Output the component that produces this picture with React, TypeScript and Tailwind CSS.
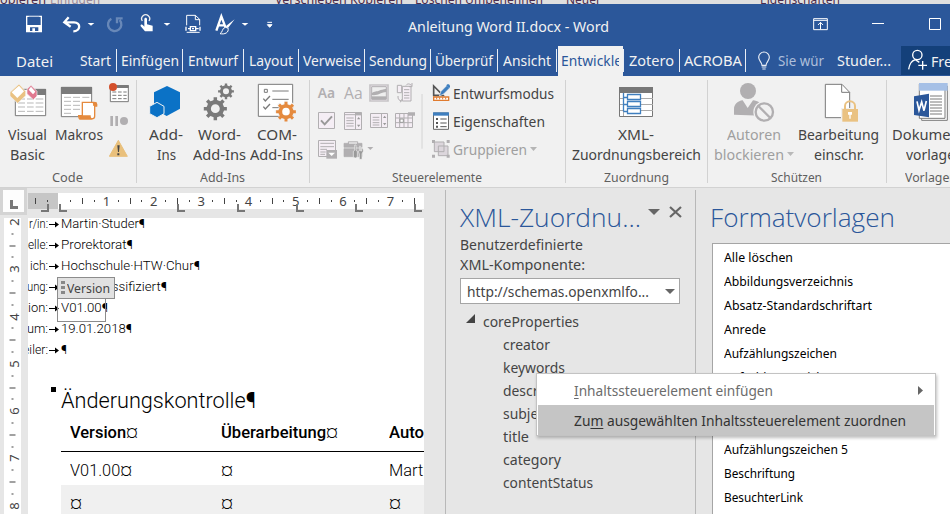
import { useLayoutEffect, useRef, useState, type ReactNode } from "react";

/** A single line of text, condensed or widened to fill the width of its box. */
function Fit({ className = "", children }: { className?: string; children: ReactNode }) {
  const outer = useRef<HTMLSpanElement>(null);
  const inner = useRef<HTMLSpanElement>(null);
  const [k, setK] = useState(1);
  useLayoutEffect(() => {
    if (outer.current && inner.current && inner.current.offsetWidth) {
      setK(outer.current.offsetWidth / inner.current.getBoundingClientRect().width);
    }
  }, []);
  return (
    <span ref={outer} className={"block shrink-0 whitespace-nowrap " + className}>
      <span ref={inner} className="inline-block origin-left whitespace-pre" style={{ transform: `scaleX(${k})` }}>
        {children}
      </span>
    </span>
  );
}

const G = "#7a7a7a";
const L = "#b1afb1";

function Caret({ className = "" }: { className?: string }) {
  return (
    <svg className={className} width="7" height="4" viewBox="0 0 7 4">
      <path d="M0 0h7L3.5 4z" fill="currentColor" />
    </svg>
  );
}

function gearPath(cx: number, cy: number, r: number, teeth = 8) {
  const pts: string[] = [];
  for (let i = 0; i < teeth; i++) {
    const a = (i * 2 * Math.PI) / teeth;
    const s = Math.PI / teeth;
    for (const [da, rr] of [[-s * 0.95, 0.74], [-s * 0.5, 0.76], [-s * 0.38, 1], [s * 0.38, 1], [s * 0.5, 0.76]]) {
      pts.push(`${cx + Math.cos(a + da) * rr * r} ${cy + Math.sin(a + da) * rr * r}`);
    }
  }
  const h = r * 0.38;
  return `M${pts.join("L")}ZM${cx - h} ${cy}a${h} ${h} 0 1 0 ${2 * h} 0a${h} ${h} 0 1 0 ${-2 * h} 0Z`;
}

function BehindStrip() {
  return (
    <div className="flex h-1 overflow-hidden bg-[#dfdfdf] text-[13px] leading-4 text-[#4c2c4c]">
      <div className="-mt-[9px] flex">
        <Fit className="w-[46px]">opieren</Fit>
        <Fit className="ml-1 w-[50px] text-[#9a8a9a]">Einfügen</Fit>
        <Fit className="ml-[175px] w-[128px]">Verschieben Kopieren</Fit>
        <Fit className="ml-3 w-[128px]">Löschen Umbenennen</Fit>
        <Fit className="ml-[23px] w-[35px]">Neuer</Fit>
        <Fit className="ml-[159px] w-[80px]">Eigenschaften</Fit>
      </div>
    </div>
  );
}

function TitleBar() {
  return (
    <div className="flex h-[42px] text-[#f2f2f2]">
      <svg className="shrink-0" width="300" height="42" viewBox="0 12 900 126">
        <path d="M80 49h44v46H80z" fill="none" stroke="#fff" strokeWidth="4" />
        <path d="M86 50h32v23H86z" fill="#2b579a" />
        <path d="M80 75h44v20h-9v-13H90v13H80zM97 85h8v12h-8z" fill="#fff" />
        <path d="M206 52l-13 15 19 13M194 67h28c22 0 20 27-2 27" fill="none" stroke="#fff" strokeWidth="7" />
        <path d="M263 69h20l-10 8zM491 69h20l-10 8zM725 69h20l-10 8z" fill="#fff" />
        <path d="M334 56a20 20 0 1 0 25 4M351 70V55h17" fill="none" stroke="#6888b8" strokeWidth="7" />
        <path d="M427 63a12 12 0 1 1 20 0" fill="none" stroke="#eee" strokeWidth="4" />
        <path d="M433 58c0-6 8-6 8 0v15l17 4v17H435l-13-15c-2-5 4-7 7-3l4 4z" fill="#fff" />
        <path d="M560 76V46h26l13 12v18M586 46v13h13M560 97h39" fill="none" stroke="#fff" strokeWidth="3" />
        <path d="M571 80h16v12h-16zM558 80v12M600 80v12M564 86h6M588 86h8" fill="none" stroke="#fff" strokeWidth="4" />
        <path d="M576 84h6v4h-6z" fill="#fff" />
        <path d="M649 92l15-43 15 40M655 76h20" fill="none" stroke="#fff" strokeWidth="7" />
        <path d="M704 58l-20 26-7-5z" fill="#fff" />
        <path d="M684 84c4 14-10 20-24 17 9-4 5-16 16-19z" fill="#2b579a" stroke="#fff" strokeWidth="3" />
        <path d="M802 67h14M802 74h14l-7 8z" fill="#fff" stroke="#fff" strokeWidth="3" />
      </svg>
      <Fit className="ml-[108px] w-[201px] text-[15px] leading-[44px]">Anleitung Word II.docx - Word</Fit>
      <svg className="ml-[191px] shrink-0" width="150" height="42" viewBox="510 12 450 126">
        <path d="M551 56h41v33h-41zM551 61h41M571.500 88V67M564 75l7.500-8 7.500 8" fill="none" stroke="#fff" strokeWidth="3" />
        <path d="M726 70.500h36" stroke="#fff" strokeWidth="3" />
        <path d="M898.500 55.500h33v33h-33z" fill="none" stroke="#fff" strokeWidth="3" />
      </svg>
    </div>
  );
}

const tabs = [
  { t: "Start", cell: "w-[37px]", w: "w-[31px]" },
  { t: "Einfügen", cell: "w-[66px] pl-1", w: "w-[58px]" },
  { t: "Entwurf", cell: "w-[61px] pl-[5px]", w: "w-[50px]" },
  { t: "Layout", cell: "w-[55px] pl-[5px]", w: "w-[44px]" },
  { t: "Verweise", cell: "w-[66px] pl-1", w: "w-[58px]" },
  { t: "Sendung", cell: "w-[66px] pl-1", w: "w-[58px]" },
  { t: "Überprüf", cell: "w-[67px] pl-1", w: "w-[58px]" },
  { t: "Ansicht", cell: "w-[59px] pl-[5px]", w: "w-[48px]" },
];

function TabRow() {
  const divider = "h-[23px] border-r border-[#e8edf5]";
  return (
    <div className="flex h-[30px] text-[15px] leading-[23px] text-[#f2f2f2]">
      <Fit className="ml-[16px] mt-[4px] w-[37px]">Datei</Fit>
      <div className="ml-[27px] mt-[3px] flex">
        {tabs.map((tab) => (
          <div key={tab.t} className={`${divider} ${tab.cell}`}>
            <Fit className={tab.w}>{tab.t}</Fit>
          </div>
        ))}
      </div>
      <div className="ml-px h-[30px] w-[65px] bg-[#f1f1f1] pl-[3px] pt-[3px] text-[#2b579a]">
        <div className="w-[58px] overflow-hidden">
          <Fit className="w-[61px]">Entwickle</Fit>
        </div>
      </div>
      <div className="mt-[3px] flex">
        <div className="h-[23px] w-px bg-[#e8edf5]" />
        <div className={`${divider} w-[56px] pl-[5px]`}>
          <Fit className="w-[45px]">Zotero</Fit>
        </div>
        <div className={`${divider} w-[66px] pl-1`}>
          <Fit className="w-[58px]">ACROBA</Fit>
        </div>
      </div>
      <svg className="ml-[11px] mt-[4px] shrink-0" width="15" height="22" viewBox="381 150 45 66">
        <path d="M396 196c0-10-10-13-10-24a16 16 0 0 1 32 0c0 11-10 14-10 24zM395 201h14M397 207h10" fill="none" stroke="#e8edf5" strokeWidth="3.500" />
      </svg>
      <Fit className="ml-[6px] mt-[3px] w-[46px] text-[#aebfdb]">Sie wür</Fit>
      <Fit className="ml-[13px] mt-[3px] w-[54px]">Studer...</Fit>
      <div className="ml-[10px] flex h-[29px] w-[49px] overflow-hidden bg-[#14407a]">
        <svg className="ml-[6px] mt-[3px] shrink-0" width="21" height="22" viewBox="831 148 63 66">
          <circle cx="862" cy="166" r="14" fill="none" stroke="#fff" strokeWidth="4" />
          <path d="M836 209c2-16 10-26 20-29l12 8M878 184v26M865 197h26" fill="none" stroke="#fff" strokeWidth="4" />
        </svg>
        <Fit className="ml-[3px] mt-1 w-[50px]">Freigeb</Fit>
      </div>
    </div>
  );
}

function Group({ className, label, labelClass, children }: { className: string; label: string; labelClass: string; children: ReactNode }) {
  return (
    <div className={`flex h-full shrink-0 ${className}`}>
      <div className="flex min-w-0 flex-1 flex-col">
        <div className="flex h-[92px]">{children}</div>
        <Fit className={`text-[13px] leading-[18px] text-[#5f5f5f] ${labelClass}`}>{label}</Fit>
      </div>
      <div className="mt-1 h-[103px] w-px bg-[#d2d2d2]" />
    </div>
  );
}

/** Large ribbon button: drawing on top, two lines of caption below. */
function Big({ className, icon, a, b, disabled }: { className: string; icon: ReactNode; a: ReactNode; b: ReactNode; disabled?: boolean }) {
  return (
    <div className={`flex shrink-0 flex-col items-center text-[15px] leading-5 ${disabled ? "text-[#9f9f9f]" : "text-[#444]"} ${className}`}>
      <div className="h-12">{icon}</div>
      {a}
      {b}
    </div>
  );
}

function Ribbon() {
  return (
    <div className="flex h-[111px] overflow-hidden bg-[#f1f1f1]">
      <Group className="w-[137px]" label="Code" labelClass="ml-[52px] w-[31px]">
        <Big
          className="ml-2 w-[39px]"
          a={<Fit className="w-[39px]">Visual</Fit>}
          b={<Fit className="w-[35px]">Basic</Fit>}
          icon={
            <svg width="39" height="49" viewBox="24 6 117 147">
              <path d="M46 46h91v79H46z" fill="#fff" stroke={G} strokeWidth="3" />
              <path d="M100 45h38v18h-38z" fill={G} />
              <path d="M54 75h21M81 75h20M107 75h23M54 87h21M81 87h20M107 87h23M54 99h21M81 99h20M107 99h23M54 112h21M81 112h20M107 112h23" stroke="#aaa" strokeWidth="2.500" />
              <path d="M57 30l20 22v13L53 88 30 66V55z" fill="#eac282" stroke="#f1f1f1" strokeWidth="2" />
              <path d="M57 35l15 17-20 20-17-17z" fill="#fff" />
              <path d="M93 34l18 18v14L100 77 81 59V45z" fill="#e0788f" stroke="#f1f1f1" strokeWidth="2" />
              <path d="M93 38l13 15-7 8-13-14z" fill="#fff" />
            </svg>
          }
        />
        <Big
          className="ml-[7px] w-[49px]"
          a={<Fit className="w-[48px]">Makros</Fit>}
          b={null}
          icon={
            <svg width="48" height="49" viewBox="165 6 144 147">
              <path d="M184 40h91v88h-91z" fill="#fff" stroke={G} strokeWidth="3" />
              <path d="M183 39h93v21h-93z" fill={G} />
              <path d="M192 70h21M219 70h21M247 70h21M192 82h21M219 82h21M192 94h21M219 94h21M192 106h21M219 106h21M192 118h21" stroke="#aaa" strokeWidth="2.500" />
              <path d="M247 85h34c8 0 10 5 9 11h-6v31c0 5-4 8-9 8h-35c-3 0-4-10-4-10h11z" fill="#fff" stroke="#e58a3e" strokeWidth="4" />
              <path d="M236 124h36c0 7 2 9 7 11h-40zM278 85h12v11h-10z" fill="#e58a3e" />
            </svg>
          }
        />
        <svg className="ml-[6px] shrink-0" width="21" height="92" viewBox="327 6 63 276">
          <path d="M331 35h54v48h-54z" fill="#fff" stroke={G} strokeWidth="3" />
          <path d="M350 33h36v9h-36z" fill={G} />
          <path d="M337 54h12M354 54h11M370 54h10M337 64h12M354 64h11M370 64h10M337 74h12M354 74h11M370 74h10" stroke={G} strokeWidth="3" />
          <circle cx="339" cy="39" r="12" fill="#d4502c" />
          <path d="M331 126h8v30h-8zM346 126h8v30h-8z" fill={L} />
          <circle cx="372" cy="141" r="12" fill={L} />
          <path d="M355 199l27 48h-54z" fill="#e9c07c" stroke="#e9c07c" strokeWidth="3" strokeLinejoin="round" />
          <path d="M352 214h7l-2 20h-3zM352 238h6v6h-6z" fill="#444" />
        </svg>
      </Group>

      <Group className="w-[173px]" label="Add-Ins" labelClass="ml-[63px] w-[45px]">
        <Big
          className="ml-[11px] w-[36px]"
          a={<Fit className="w-[34px]">Add-</Fit>}
          b={<Fit className="w-[19px]">Ins</Fit>}
          icon={
            <svg width="36" height="49" viewBox="444 6 108 147">
              <path d="M501 36l39 19v49l-40 22-38-22V55z" fill="#0b72c6" />
              <path d="M471 85l21 12v22l-21 12-22-12V97z" fill="#0b72c6" stroke="#f1f1f1" strokeWidth="3" />
            </svg>
          }
        />
        <Big
          className="ml-[9px] w-[53px]"
          a={<Fit className="w-[43px]">Word-</Fit>}
          b={<Fit className="w-[53px]">Add-Ins</Fit>}
          icon={
            <svg width="53" height="49" viewBox="579 6 159 147">
              <path d={gearPath(646, 104, 35)} fill={G} fillRule="evenodd" />
              <path d={gearPath(678, 52, 24)} fill={G} fillRule="evenodd" />
            </svg>
          }
        />
        <Big
          className="ml-[4px] w-[53px]"
          a={<Fit className="w-[40px]">COM-</Fit>}
          b={<Fit className="w-[53px]">Add-Ins</Fit>}
          icon={
            <svg width="53" height="49" viewBox="750 6 159 147">
              <path d="M775 31h103v96H775z" fill="#fff" stroke={G} strokeWidth="3" />
              <path d="M793 46h9v9h-9zM817 51h49M817 76h49M817 101h20" fill="none" stroke={G} strokeWidth="3" />
              <path d="M790 74l6 7 14-15M790 98l6 7 14-15" fill="none" stroke={G} strokeWidth="4" />
              <path d={gearPath(858, 113, 34)} fill="#f1f1f1" fillRule="evenodd" />
              <path d={gearPath(858, 113, 30)} fill="#e58a3e" fillRule="evenodd" />
            </svg>
          }
        />
      </Group>

      <Group className="w-[256px]" label="Steuerelemente" labelClass="ml-[82px] w-[90px]">
        <svg className="ml-[5px] shrink-0" width="108" height="92" viewBox="30 6 324 276">
          <text x="38" y="71" fontSize="43" fontWeight="600" fill={L} fontFamily="Noto Sans" textLength="52" lengthAdjust="spacingAndGlyphs">Aa</text>
          <text x="117" y="74" fontSize="47" fontWeight="400" fill={L} fontFamily="Open Sans" textLength="56" lengthAdjust="spacingAndGlyphs">Aa</text>
          <path d="M195 33h54v48h-54z" fill="#f6eef6" stroke="#c6c4c6" strokeWidth="5" />
          <path d="M200 38h44v38h-44z" fill="#eee" stroke={L} strokeWidth="3" />
          <path d="M200 58c8-8 16-5 22-8s12-4 22-6v10c-15 0-25 12-44 9z" fill={L} />
          <path d="M200 67h44v9h-44z" fill={L} />
          <g fill="#f5eef5" stroke={L} strokeWidth="3">
            <path d="M292 37h26v44h-26zM277 34h13v22h-13M277 34v22M297 47h16M297 56h16M297 64h16M297 72h16M303 34c5-6 10-5 17 0M321 27v11h-9M279 66c-1 10 4 14 11 15M290 76l-4 9" />
            <path d="M40.500 115.500h48v48h-48z" />
            <path d="M118.500 115.500h51v51h-51zM119 122h50M151.500 117v49M124 132h22M124 140h22M124 148h22M124 156h22" />
            <path d="M196.500 118.500h51v42h-51zM229.500 119v42M203 130h20M203 138h20M203 146h20M203 153h20" />
            <path d="M271.500 118.500h51v42h-51zM272 132h49M272 146h49M284 120v41M297 120v41M309 120v41" />
            <path d="M40.500 199.500h51v48h-51zM46 208h41M46 218h41M46 226h20M46 234h16M46 241h14" />
          </g>
          <path d="M48 139l11 12 22-24" fill="none" stroke="#999" strokeWidth="6" />
          <path d="M152 116h19v8h-19zM309 115h21v10h-21z" fill={L} />
          <path d="M156 136h10l-5-7zM156 152h10l-5 7zM234 132h10l-5-7zM234 147h10l-5 7z" fill="#999" />
          <path d="M285 135h10v10h-10z" fill="#fff" stroke="#999" strokeWidth="3" />
          <path d="M64 228h32v26H64z" fill={L} />
          <path d="M70 236h20l-10 10z" fill="#fff" />
          <path d="M130 209v-6h28v6M117 208h54v12h-54zM117 224h54v24h-54z" fill={L} stroke={L} strokeWidth="2" />
          <path d="M132 209v-4h24v4z" fill="#f1f1f1" />
          <path d="M149 213v16l-4 3v14c0 8 12 8 12 0v-14l-4-3v-16zM164 216v14l-4 2 3 8v16h8v-18c6-4 5-14-1-17v10h-3v-14z" fill="#999" stroke="#f1f1f1" strokeWidth="2" />
          <path d="M187 219h18l-9 9z" fill={L} />
          <path d="M351 60v164" stroke="#d4d4d4" strokeWidth="3" />
        </svg>
        <svg className="ml-[8px] shrink-0" width="21" height="92" viewBox="375 6 63 276">
          <path d="M383 36v28h28z" fill="#f1f1f1" stroke="#555" strokeWidth="5" />
          <path d="M400 66l5-14 18-18 8 8-18 18z" fill="#3f7fbf" stroke="#f1f1f1" strokeWidth="2" />
          <path d="M424 31l5 0 3 4v5l-3 2-8-8z" fill="#3f7fbf" />
          <path d="M383 69h45v10h-45z" fill="#fff" stroke="#e07b2f" strokeWidth="4" />
          <path d="M392 70v6M401 70v6M410 70v6M419 70v6" stroke="#e07b2f" strokeWidth="3" />
          <path d="M382.500 117h45v49h-45z" fill="#fff" stroke="#666" strokeWidth="3" />
          <path d="M381 115h48v10h-48z" fill="#3f7fbf" />
          <path d="M403 135h19M403 147h19M403 158h19" stroke="#555" strokeWidth="3" />
          <path d="M390 132h6v6h-6zM390 144h6v6h-6zM390 155h6v6h-6z" fill="#555" />
          <path d="M385 204h29v29h-29zM397 216h29v29h-29z" fill="#dcd6dc" stroke={L} strokeWidth="3" />
          <path d="M378 198h9v9h-9zM422 198h9v9h-9zM378 242h9v9h-9zM422 242h9v9h-9z" fill={L} />
        </svg>
        <div className="ml-px mt-[3px] text-[15px] leading-7 text-[#444]">
          <Fit className="w-[101px]">Entwurfsmodus</Fit>
          <Fit className="w-[92px]">Eigenschaften</Fit>
          <div className="flex items-center text-[#9f9f9f]">
            <Fit className="w-[74px]">Gruppieren</Fit>
            <Caret className="ml-[3px] text-[#b5b5b5]" />
          </div>
        </div>
      </Group>

      <Group className="w-[142px]" label="Zuordnung" labelClass="ml-[38px] w-[65px]">
        <Big
          className="ml-[5px] w-[130px]"
          a={<Fit className="w-[36px]">XML-</Fit>}
          b={<Fit className="w-[129px]">Zuordnungsbereich</Fit>}
          icon={
            <svg className="ml-[2px] mt-[11px]" width="36" height="31" viewBox="0 0 36 31">
              <path d="M.5.5h33v29H.5z" fill="#fff" stroke="#777" />
              <path d="M0 0h34v6H0z" fill="#777" />
              <path d="M1 11.500h33M1 17.500h33M1 23.500h33M4.500 7v22" stroke="#aaa" />
              <path d="M5 6h17v20H5z" fill="#fff" />
              <path d="M4.500 6v18.500M4.500 10.500H9M4.500 17.500H9M4.500 24.500H9" stroke="#3f7fbf" strokeWidth="1.300" />
              <path d="M8.500 7.500h13v5h-13zM8.500 14.500h13v5h-13zM8.500 21.500h13v5h-13z" fill="#fff" stroke="#3f7fbf" strokeWidth="1.300" />
            </svg>
          }
        />
      </Group>

      <Group className="w-[179px]" label="Schützen" labelClass="ml-[63px] w-[51px]">
        <Big
          disabled
          className="ml-[6px] w-[80px]"
          a={<Fit className="w-[54px]">Autoren</Fit>}
          b={
            <div className="flex items-center">
              <Fit className="w-[70px]">blockieren</Fit>
              <Caret className="ml-[3px] text-[#b9b9b9]" />
            </div>
          }
          icon={
            <svg width="45" height="49" viewBox="306 6 135 147">
              <circle cx="354" cy="51" r="24" fill={L} />
              <path d="M312 122v-17c0-14 12-24 26-26l15 23 16-23c14 2 26 8 26 20v26z" fill={L} />
              <circle cx="403" cy="114" r="33" fill="#f1f1f1" />
              <circle cx="403" cy="114" r="26" fill="none" stroke={L} strokeWidth="7" />
              <path d="M385 96l36 36" stroke={L} strokeWidth="7" />
            </svg>
          }
        />
        <Big
          className="ml-[3px] w-[83px]"
          a={<Fit className="w-[81px]">Bearbeitung</Fit>}
          b={<Fit className="w-[50px]">einschr.</Fit>}
          icon={
            <svg className="ml-[5px]" width="36" height="49" viewBox="582 6 108 147">
              <path d="M589 31h50l23 24v76h-73z" fill="#fff" stroke={G} strokeWidth="3" />
              <path d="M638 31v24h24" fill="none" stroke={G} strokeWidth="3" />
              <path d="M636 102h54v46h-54z" fill="#f1f1f1" />
              <path d="M648 108V96a15 14 0 0 1 30 0v12" fill="none" stroke="#eac282" strokeWidth="6" />
              <path d="M640 105h47v38h-47z" fill="#eac282" />
              <path d="M657 114h12v8h-4v12h-4v-12h-4z" fill="#fff" />
            </svg>
          }
        />
      </Group>

      <div className="w-[63px] shrink-0 overflow-hidden">
        <div className="flex h-[92px]">
          <div className="ml-[5px] text-[15px] leading-5 text-[#444]">
            <svg className="-mb-px ml-[21px]" width="39" height="49" viewBox="849 6 117 147">
              <path d="M875 36h77v103h-77z" fill="#fff" stroke={G} strokeWidth="3" />
              <path d="M868 30h77v103h-77z" fill="#fff" stroke={G} strokeWidth="3" />
              <path d="M867 27h86v23h-86z" fill="#a6c0e6" />
              <path d="M900 66h36M900 75h36M900 84h36M900 93h36M900 102h36M900 111h36M900 120h36" stroke={G} strokeWidth="3" />
              <path d="M852 67l45-8v71l-45-7z" fill="#2b579a" />
              <path d="M861 82l6 27 8-25 7 26 7-29" fill="none" stroke="#fff" strokeWidth="5" />
            </svg>
            <Fit className="w-[73px]">Dokument</Fit>
            <Fit className="ml-[14px] w-[49px]">vorlage</Fit>
          </div>
        </div>
        <Fit className="ml-[18px] w-[52px] text-[13px] leading-[18px] text-[#5f5f5f]">Vorlagen</Fit>
      </div>
    </div>
  );
}

const hMarks = ["|", "·", " ", "·", "|", "·", "1", "·", "|", "·", "2", "·", "|", "·", "3", "·", "|", "·", "4", "·", "|", "·", "5", "·", "|", "·", "6", "·", "|", "·", "7", "·", "|"];
const vMarks = ["2", "·", "|", "·", "3", "·", "|", "·", "4", "·", "|", "·", "5", "·", "|", "·", "6", "·", "|", "·", "7", "·", "|", "·", "8", "·"];

function Mark({ m }: { m: string }) {
  if (m === "|") return <span className="block h-[6px] w-px bg-[#444]" />;
  if (m === "·") return <span className="block h-[2px] w-px bg-[#444]" />;
  return <span className="text-[13px] leading-4 text-[#444]">{m}</span>;
}

function TopRuler() {
  const stops = ["ml-[31px]", "ml-[110px]", "ml-[52px]", "ml-[51px]", "ml-[51px]", "ml-[51px]"];
  return (
    <div className="relative mt-[5px] h-[25px] w-[396px] overflow-hidden">
      <div className="flex h-4 bg-gradient-to-r from-[#c6c6c6] from-[30px] to-white to-[30px] pl-[1.6px]">
        {hMarks.map((m, i) => (
          <div key={i} className="flex w-[11.83px] shrink-0 items-center justify-center">
            <Mark m={m} />
          </div>
        ))}
      </div>
      <div className="absolute left-0 top-[11px] flex">
        {stops.map((s, i) => (
          <span key={i} className={`block h-2 w-2 shrink-0 border-b-2 border-l-2 border-[#777] ${s}`} />
        ))}
      </div>
      <span className="absolute left-[13px] top-[11px] block h-2 w-2 border-b-2 border-r-2 border-[#777]" />
    </div>
  );
}

const docRows = [
  { l: "r/in:", w: "w-[19px]", t: "Martin·Studer¶", tw: "w-[84px]" },
  { l: "elle:", w: "w-[20px]", t: "Prorektorat¶", tw: "w-[72px]" },
  { l: "ich:", w: "w-[18px]", t: "Hochschule·HTW·Chur¶", tw: "w-[139px]" },
  { l: "ung:", w: "w-[21px]", t: "Nicht·klassifiziert¶", tw: "w-[106px]" },
  { l: "ion:", w: "w-[20px]", t: "V01.00¶", tw: "w-[47px]" },
  { l: "um:", w: "w-[21px]", t: "19.01.2018¶", tw: "w-[71px]" },
  { l: "eiler:", w: "w-[25px]", t: "¶", tw: "w-[6px]" },
];

function Arrow() {
  return (
    <svg className="ml-[1px] mr-[2px] mt-px shrink-0" width="10" height="7" viewBox="0 0 10 7">
      <path d="M0 3h6V.5L10 3.500 6 6.500V4H0z" fill="#000" />
    </svg>
  );
}

function Document() {
  return (
    <div className="relative h-[296px] w-[396px] overflow-hidden bg-white font-['Roboto'] font-light text-black">
      <div className="-mt-[5px] text-[13px] leading-[21px]">
        {docRows.map((r) => (
          <div key={r.l} className="flex h-[21px] items-center">
            <div className="flex w-5 shrink-0 justify-end">
              <Fit className={r.w}>{r.l}</Fit>
            </div>
            <Arrow />
            <Fit className={r.tw}>{r.t}</Fit>
          </div>
        ))}
      </div>
      <div className="mt-[27px] flex">
        <span className="ml-[23px] block h-[5px] w-[5px] bg-black" />
        <Fit className="ml-[5px] w-[195px] text-[22px] leading-[28px]">Änderungskontrolle¶</Fit>
      </div>
      <div className="ml-[33px] text-[16px]">
        <div className="flex h-[37px] items-center border-b border-black pl-[9px]">
          <div className="w-[151px] shrink-0">
            <Fit className="w-[68px]">
              <span className="font-medium">Version</span>¤
            </Fit>
          </div>
          <Fit className="w-[117px]">
            <span className="font-medium">Überarbeitung</span>¤
          </Fit>
          <Fit className="ml-[51px] w-[41px] font-medium">Autor</Fit>
        </div>
        <div className="flex h-[33px] items-center pl-[9px] pt-1">
          <Fit className="w-[62px]">V01.00¤</Fit>
          <Fit className="ml-[89px] w-[12px]">¤</Fit>
          <Fit className="ml-[156px] w-[47px]">Martin</Fit>
        </div>
        <div className="flex h-[37px] items-center bg-[#f0f0f0] pl-[9px]">
          <Fit className="w-[12px]">¤</Fit>
          <Fit className="ml-[139px] w-[12px]">¤</Fit>
          <Fit className="ml-[156px] w-[12px]">¤</Fit>
        </div>
      </div>
      <div className="absolute left-[29px] top-[80px] h-[24px] w-[49px] border border-[#8c8c8c]" />
      <div className="absolute left-[29px] top-[59px] flex h-[22px] w-[58px] items-center border border-[#8c8c8c] bg-[#e1e1e1] font-['Noto_Sans'] text-[13px] font-normal text-[#444]">
        <svg className="ml-[3px]" width="4" height="14" viewBox="0 0 4 14">
          <path d="M0 0h4v3H0zM0 5h4v3H0zM0 10h4v3H0z" fill="#888" />
        </svg>
        <Fit className="ml-[2px] mt-px w-[43px]">Version</Fit>
      </div>
    </div>
  );
}

const nodes = [
  { t: "creator", w: "w-[47px]" },
  { t: "keywords", w: "w-[62px]" },
  { t: "description", w: "w-[73px]" },
  { t: "subject", w: "w-[47px]" },
  { t: "title", w: "w-[26px]" },
  { t: "category", w: "w-[58px]" },
  { t: "contentStatus", w: "w-[90px]" },
];

function MappingPane() {
  return (
    <div className="mt-[2px] w-[250px] shrink-0 border-l border-[#b8b8b8] pl-[14px] text-[15px] text-[#444]">
      <div className="flex pt-[9px]">
        <Fit className="w-[181px] font-['Open_Sans'] text-[26px] font-light leading-9 text-[#2b579a]">XML-Zuordnu...</Fit>
        <svg className="ml-[7px] mt-[4px]" width="36" height="18" viewBox="0 0 36 18">
          <path d="M0 6h12L6 12z" fill="#666" />
          <path d="M22 4l11 10M33 4L22 14" stroke="#666" strokeWidth="2.200" />
        </svg>
      </div>
      <div className="-mt-px leading-5">
        <Fit className="w-[123px]">Benutzerdefinierte</Fit>
        <Fit className="w-[125px]">XML-Komponente:</Fit>
      </div>
      <div className="mt-[4px] flex h-[26px] w-[220px] items-center border border-[#a5a5a5] bg-white">
        <Fit className="ml-[6px] w-[182px]">http://schemas.openxmlfo...</Fit>
        <svg className="ml-[16px]" width="10" height="5" viewBox="0 0 10 5">
          <path d="M0 0h10L5 5z" fill="#666" />
        </svg>
      </div>
      <div className="mt-[6px] leading-[23px]">
        <div className="flex">
          <svg className="ml-[6px] mt-[4px]" width="9" height="9" viewBox="0 0 9 9">
            <path d="M9 0v9H0z" fill="#444" />
          </svg>
          <Fit className="ml-[8px] w-[96px]">coreProperties</Fit>
        </div>
        {nodes.map((n) => (
          <Fit key={n.t} className={`ml-[43px] ${n.w}`}>
            {n.t}
          </Fit>
        ))}
      </div>
    </div>
  );
}

const styles = [
  { t: "Alle löschen", w: "w-[69px]" },
  { t: "Abbildungsverzeichnis", w: "w-[129px]" },
  { t: "Absatz-Standardschriftart", w: "w-[148px]" },
  { t: "Anrede", w: "w-[42px]" },
  { t: "Aufzählungszeichen", w: "w-[113px]" },
  { t: "Aufzählungszeichen 2", w: "w-[124px]" },
  { t: "Aufzählungszeichen 3", w: "w-[124px]" },
  { t: "Aufzählungszeichen 4", w: "w-[124px]" },
  { t: "Aufzählungszeichen 5", w: "w-[124px]" },
  { t: "Beschriftung", w: "w-[71px]" },
  { t: "BesuchterLink", w: "w-[79px]" },
];

function StylesPane() {
  return (
    <div className="mt-[2px] flex-1 overflow-hidden border-l border-[#b8b8b8] pl-4">
      <Fit className="-ml-[2px] mt-[9px] w-[185px] font-['Open_Sans'] text-[26px] font-light leading-9 text-[#2b579a]">Formatvorlagen</Fit>
      <div className="mt-[8px] h-[280px] border-l border-t border-[#a5a5a5] bg-white pl-[11px] pt-px text-[13px] leading-6 text-black">
        {styles.map((s) => (
          <Fit key={s.t} className={s.w}>
            {s.t}
          </Fit>
        ))}
      </div>
    </div>
  );
}

function ContextMenu() {
  return (
    <div className="absolute left-[536px] top-[373px] h-[63px] w-[400px] border border-[#c3c3c3] bg-white p-px text-[15px] shadow-[1px_2px_3px_rgba(0,0,0,0.25)]">
      <div className="flex h-[30px] items-center pl-9 text-[#6c6c6c]">
        <Fit className="w-[199px]">
          <u className="underline-offset-2">I</u>nhaltssteuerelement einfügen
        </Fit>
        <svg className="ml-[145px]" width="5" height="9" viewBox="0 0 5 9">
          <path d="M0 0l5 4.500L0 9z" fill="#666" />
        </svg>
      </div>
      <div className="flex h-[30px] items-center bg-[#c5c5c5] pl-9 text-[#333]">
        <Fit className="w-[332px]">
          Zu<u className="underline-offset-2">m</u> ausgewählten Inhaltssteuerelement zuordnen
        </Fit>
      </div>
    </div>
  );
}

export default function App() {
  return (
    <div className="relative h-[514px] w-[950px] overflow-hidden bg-[#e6e6e6] font-['Noto_Sans','Open_Sans',sans-serif]">
      <BehindStrip />
      <div className="bg-[#2b579a]">
        <TitleBar />
        <TabRow />
      </div>
      <Ribbon />
      <div className="flex h-[327px] border-t border-[#d2d2d2]">
        <div className="flex w-7 shrink-0 flex-col">
          <div className="flex h-[27px] w-[27px] items-center justify-center border-[3px] border-[#d4d4d4] border-t-[2px] bg-[#fdfdfd]">
            <span className="mt-[6px] block h-[9px] w-2 border-b-[3px] border-l-[3px] border-[#777]" />
          </div>
          <div className="ml-1 mt-[3px] h-[296px] w-[17px] overflow-hidden bg-white">
            <div className="-mt-[2px]">
              {vMarks.map((m, i) => (
                <div key={i} className="flex h-[11.83px] items-center justify-center">
                  <div className="-rotate-90">
                    <Mark m={m} />
                  </div>
                </div>
              ))}
            </div>
          </div>
        </div>
        <div className="flex w-[417px] shrink-0 flex-col">
          <TopRuler />
          <Document />
        </div>
        <MappingPane />
        <StylesPane />
      </div>
      <ContextMenu />
    </div>
  );
}
